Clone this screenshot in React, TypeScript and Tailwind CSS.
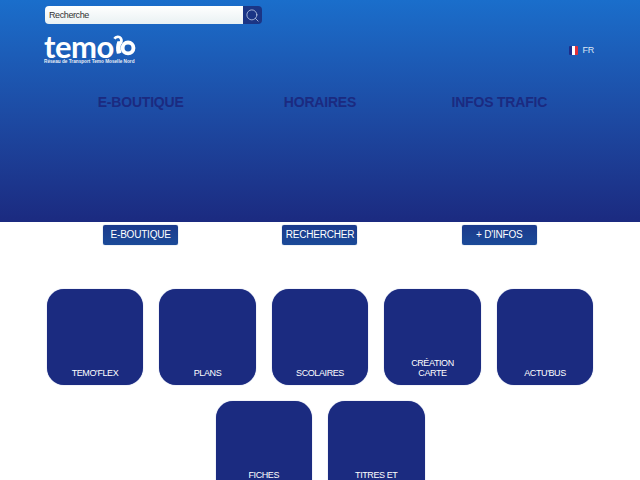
import { Search } from 'lucide-react';

const navItems = [
  { title: 'E-BOUTIQUE', action: 'E-BOUTIQUE' },
  { title: 'HORAIRES', action: 'RECHERCHER' },
  { title: 'INFOS TRAFIC', action: "+ D'INFOS" },
];

const tiles = [
  ["TEMO'FLEX"],
  ['PLANS'],
  ['SCOLAIRES'],
  ['CRÉATION', 'CARTE'],
  ["ACTU'BUS"],
  ['FICHES', 'HORAIRES'],
  ['TITRES ET', 'TARIFS'],
];

const Logo = () => (
  <div className="ml-[44px] mt-[12px] w-[92px] h-[29px] text-white">
    <div className="flex items-start h-[22px]">
      <span className="font-['Lato',sans-serif] font-bold text-[31px] leading-[20px] tracking-[-0.500px]">temo</span>
      <svg width="24" height="22" viewBox="0 0 24 22" className="-ml-[1px] -mt-[1px]">
        <circle cx="15.500" cy="13" r="5.600" fill="none" stroke="white" strokeWidth="4" />
        <path d="M4.500 6c-1.500 4-1.800 8-.5 13 1.800-.2 3.500-.6 4.800-1.400-1.500-4-1.200-8 .7-11.600z" fill="white" />
        <path d="M1.500 3.500c1.500-2.500 5-2.700 6.500-.5 1.200 1.800.8 3.800-.5 5.500" fill="none" stroke="white" strokeWidth="2.800" />
      </svg>
    </div>
    <div className="font-['Liberation_Sans',sans-serif] font-bold text-[4.700px] leading-[6px] mt-[1px] whitespace-nowrap opacity-90">
      Réseau de Transport Temo Moselle Nord
    </div>
  </div>
);

const App = () => {
  return (
    <div className="w-[640px] h-[480px] overflow-hidden bg-white font-['Liberation_Sans',sans-serif]">
      <header className="h-[222px] bg-gradient-to-b from-[#1a6ecb] to-[#1b2a80]">
        <div className="pt-[6px] pl-[45px]">
          <div className="flex w-[217px] h-[18px] rounded-[4px] overflow-hidden">
            <div className="w-[198px] bg-gradient-to-b from-white to-[#e9f1f3] pl-[4px] text-[9px] tracking-[-0.400px] leading-[18px] text-[#333]">
              Recherche
            </div>
            <div className="flex-1 bg-[#1b3585] flex items-center justify-center">
              <Search size={15} strokeWidth={1.200} className="text-[#c9d6ee]" />
            </div>
          </div>
        </div>
        <div className="flex items-start">
          <Logo />
          <div className="ml-auto mr-[46px] mt-[21px] flex items-center gap-[4px] text-[9px] tracking-[-0.200px] leading-[10px] text-[#dbe6f5]">
            <div className="flex w-[9px] h-[9px] rounded-[1px] overflow-hidden">
              <div className="w-1/3 bg-[#1d2f8c]" />
              <div className="w-1/3 bg-white" />
              <div className="w-1/3 bg-[#e0303a]" />
            </div>
            FR
          </div>
        </div>
        <div className="mt-[29px] ml-[51px] grid grid-cols-3 w-[538px]">
          {navItems.map((item) => (
            <div key={item.title} className="text-center text-[14px] tracking-[-0.200px] leading-[16px] font-bold text-[#1b2a80]">
              {item.title}
            </div>
          ))}
        </div>
      </header>
      <div className="mt-[3px] ml-[51px] grid grid-cols-3 w-[538px]">
        {navItems.map((item) => (
          <div key={item.action} className="flex justify-center">
            <div className="w-[75px] h-[20px] rounded-[2px] bg-gradient-to-b from-[#1b3a8c] to-[#1b4a98] text-[10px] tracking-[-0.200px] leading-[20px] text-center text-white whitespace-nowrap shadow-[0_0_1px_#5a7ab0]">
              {item.action}
            </div>
          </div>
        ))}
      </div>
      <div className="mt-[44px] flex flex-wrap justify-center gap-x-[16px] gap-y-[16px] w-[640px] px-[40px]">
        {tiles.map((lines) => (
          <div
            key={lines[0]}
            className="w-[96.500px] h-[96px] rounded-[17px] bg-[#1b2b80] flex flex-col items-center justify-end pb-[7px] text-[9px] tracking-[-0.400px] leading-[10px] text-white text-center shadow-[0_0_1px_#7a88c0]"
          >
            {lines.map((line) => (
              <span key={line}>{line}</span>
            ))}
          </div>
        ))}
      </div>
    </div>
  );
};

export default App;
